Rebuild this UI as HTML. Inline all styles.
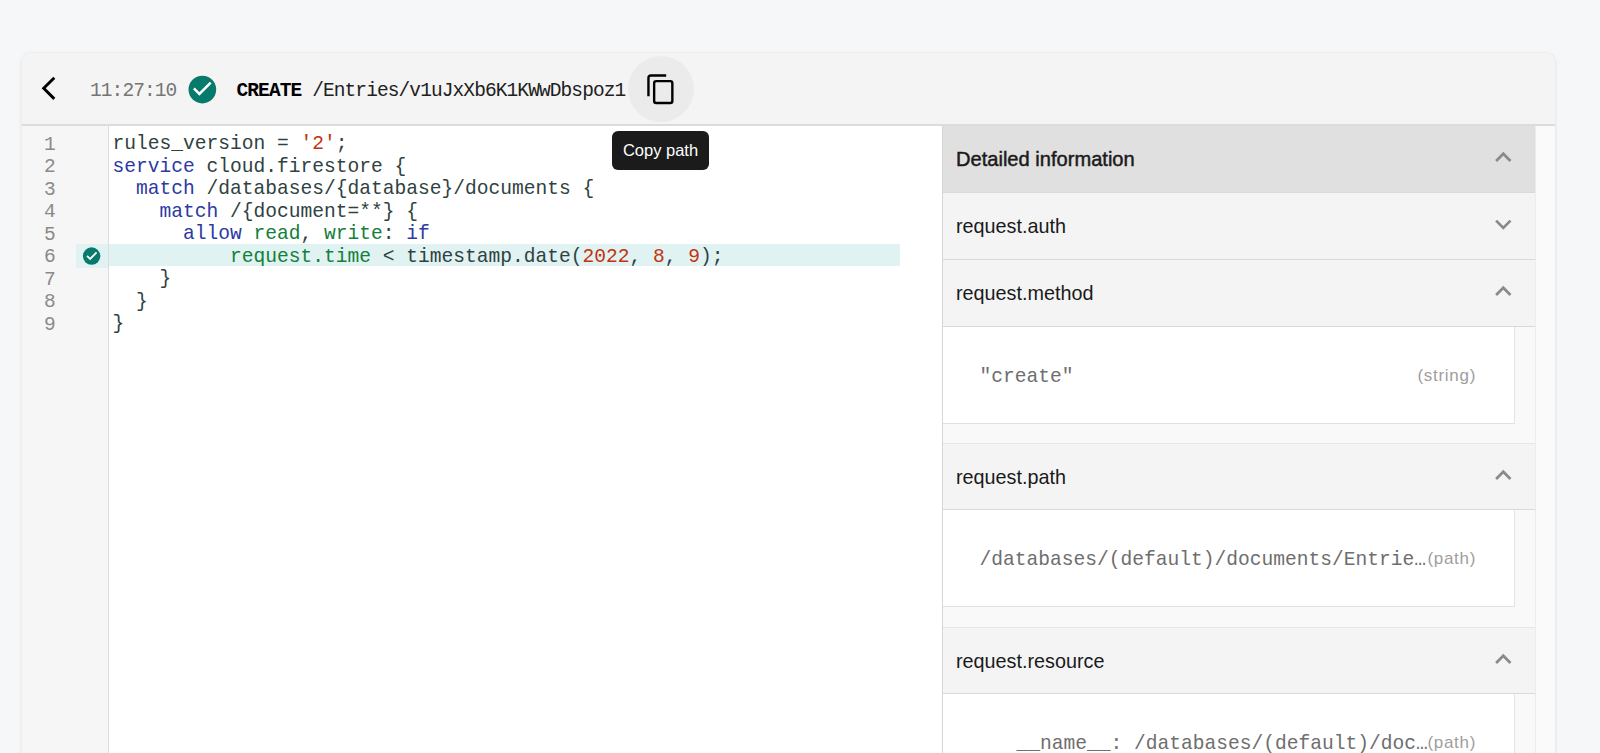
<!DOCTYPE html>
<html><head><meta charset="utf-8">
<style>
*{box-sizing:border-box;margin:0;padding:0}
html,body{width:1600px;height:753px;overflow:hidden;background:#f6f7f9;font-family:"Liberation Sans",sans-serif}
.abs{position:absolute}
#card{position:absolute;left:22px;top:53px;width:1533px;height:760px;background:#fff;border-radius:9px 9px 0 0;box-shadow:0 0 1px rgba(0,0,0,.14),0 1px 5px rgba(0,0,0,.09);overflow:hidden}
#hdr{position:absolute;left:0;top:0;width:1533px;height:73px;background:#f4f4f4;border-bottom:2px solid #dcdcdc}
.mono{font-family:"Liberation Mono",monospace}
#gutter{position:absolute;left:0;top:73px;width:86px;height:700px;background:#f6f6f6}
#code{position:absolute;left:90.5px;top:80px;font-family:"Liberation Mono",monospace;font-size:19.58px;line-height:22.5px;color:#2f4242;white-space:pre}
.kw{color:#2c3aa3}
.st{color:#c4320f}
.gr{color:#13803a}
#lnums{position:absolute;left:22px;top:80.5px;font-family:"Liberation Mono",monospace;font-size:19.5px;line-height:22.5px;color:#8a8a8a;white-space:pre}
#hl{position:absolute;left:86px;top:191.3px;width:792px;height:22.2px;background:#e0f2f1}#hlg{position:absolute;left:54px;top:190.9px;width:32px;height:23.9px;background:#e0f2f1}
#panel{position:absolute;left:920px;top:73px;width:593px;height:700px;background:#f9f9f9;border-left:1px solid #d6d6d6}
.ph{position:absolute;left:0;width:592px;background:#f4f4f4;border-bottom:1px solid #d9d9d9;font-size:19.8px;color:#1a1a1a}
.ph span{position:absolute;left:13px;top:21.5px}
.box{position:absolute;left:0;width:572px;background:#fff;border-right:1px solid #e3e3e3;border-bottom:1px solid #e0e0e0}
#sb{position:absolute;left:1513px;top:73px;width:20px;height:700px;background:#fafafa;border-left:1px solid #ececec}
.chev{position:absolute;left:544px;top:14.7px;width:32.6px;height:32.6px;fill:#8a8a8a}
.val{position:absolute;left:36.5px;top:38px;font-family:"Liberation Mono",monospace;font-size:19.58px;line-height:24px;color:#6e6e6e;white-space:pre}
.typ{position:absolute;right:38px;top:36.5px;font-size:17px;letter-spacing:.7px;line-height:24px;color:#9e9e9e}
</style></head>
<body>
<div id="card">
  <div id="hdr">
    <svg class="abs" style="left:0;top:0" width="60" height="73"><path d="M32.3 24.7 L21.7 35.3 L32.3 45.9" fill="none" stroke="#000" stroke-width="2.9" stroke-linejoin="miter"/></svg>
    <div class="abs mono" style="left:68px;top:26.5px;font-size:19.5px;letter-spacing:-.9px;color:#757575">11:27:10</div>
    <svg class="abs" style="left:0;top:0" width="240" height="73"><circle cx="180.35" cy="36.55" r="13.85" fill="#087a6c"/><path d="M171.9 35.4 L177.4 40.9 L188.7 29.6" fill="none" stroke="#fff" stroke-width="2.5"/></svg>
    <div class="abs mono" style="left:214.5px;top:26.5px;font-size:19.5px;letter-spacing:-.9px;color:#000"><b>CREATE</b> <span style="color:#212121">/Entries/v1uJxXb6K1KWwDbspoz1</span></div>
    <div class="abs" style="left:605.6px;top:3.3px;width:66px;height:66px;border-radius:50%;background:#ebebeb"></div>
    <svg class="abs" style="left:600px;top:0" width="80" height="73"><path d="M26.45 43.2 V25 Q26.45 22.45 29 22.45 H44.2" fill="none" stroke="#000" stroke-width="2.4"/><rect x="32.15" y="28.15" width="18.2" height="21.9" rx="2" fill="none" stroke="#000" stroke-width="2.4"/></svg>
  </div>
  <div id="gutter"></div>
  <div id="hl"></div><div id="hlg"></div>
  <div id="lnums">1
2
3
4
5
6
7
8
9</div>
  <svg class="abs" style="left:0;top:0" width="100" height="240"><circle cx="69.6" cy="203.1" r="8.75" fill="#087a6c"/><path d="M65 202.8 L68.1 205.9 L74.6 199.4" fill="none" stroke="#fff" stroke-width="1.8"/></svg><div class="abs" style="left:86px;top:73px;width:1px;height:700px;background:#dcdcdc"></div>
  <div id="code">rules_version = <span class="st">'2'</span>;
<span class="kw">service</span> cloud.firestore {
  <span class="kw">match</span> /databases/{database}/documents {
    <span class="kw">match</span> /{document=**} {
      <span class="kw">allow</span> <span class="gr">read</span>, <span class="gr">write</span>: <span class="kw">if</span>
          <span class="gr">request.time</span> &lt; timestamp.date(<span class="st">2022</span>, <span class="st">8</span>, <span class="st">9</span>);
    }
  }
}</div>
  <div id="panel">
    <div class="ph" style="top:0;height:67px;background:#e0e0e0;font-size:20.1px;-webkit-text-stroke:.45px #1a1a1a"><span style="top:21.6px">Detailed information</span><svg class="chev" viewBox="0 0 24 24"><path d="M12 8l-6 6 1.41 1.41L12 10.83l4.59 4.58L18 14z"/></svg></div>
    <div class="ph" style="top:67px;height:67px"><span>request.auth</span><svg class="chev" viewBox="0 0 24 24"><path d="M16.59 8.59L12 13.17 7.41 8.59 6 10l6 6 6-6z"/></svg></div>
    <div class="ph" style="top:134px;height:67px"><span>request.method</span><svg class="chev" viewBox="0 0 24 24"><path d="M12 8l-6 6 1.41 1.41L12 10.83l4.59 4.58L18 14z"/></svg></div>
    <div class="box" style="top:201px;height:97px"><div class="val">"create"</div><div class="typ">(string)</div></div>
    <div class="ph" style="top:317px;height:67px;border-top:1px solid #e6e6e6"><span>request.path</span><svg class="chev" viewBox="0 0 24 24"><path d="M12 8l-6 6 1.41 1.41L12 10.83l4.59 4.58L18 14z"/></svg></div>
    <div class="box" style="top:384px;height:97px"><div class="val">/databases/(default)/documents/Entrie&#8230;</div><div class="typ">(path)</div></div>
    <div class="ph" style="top:501px;height:67px;border-top:1px solid #e6e6e6"><span>request.resource</span><svg class="chev" viewBox="0 0 24 24"><path d="M12 8l-6 6 1.41 1.41L12 10.83l4.59 4.58L18 14z"/></svg></div>
    <div class="box" style="top:568px;height:97px"><div class="val" style="left:73.5px">__name__: /databases/(default)/doc&#8230;</div><div class="typ">(path)</div></div>
  </div>
  <div id="sb"></div>
  <div class="abs" style="left:590px;top:77.5px;width:97px;height:39px;background:#1b1b1b;border-radius:6px;color:#fff;font-size:16.5px;line-height:39px;text-align:center">Copy path</div>
</div>
</body></html>
